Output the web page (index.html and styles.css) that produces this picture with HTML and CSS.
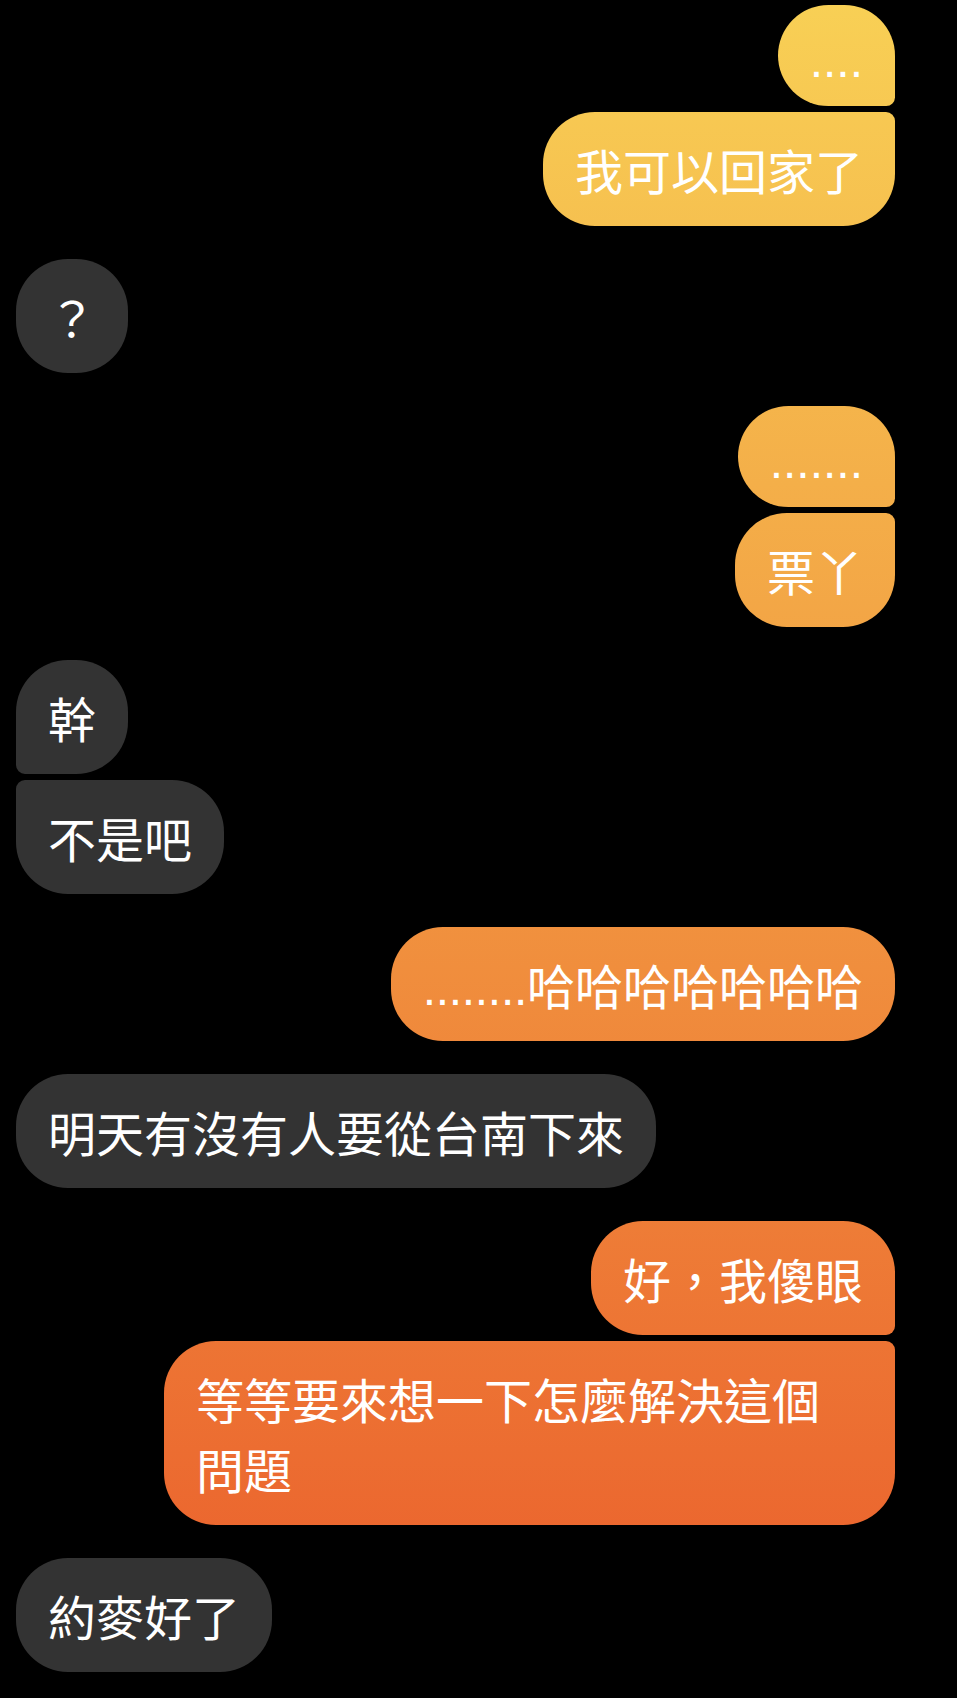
FILE: index.html
```html
<!DOCTYPE html>
<html lang="zh-Hant">
<head>
<meta charset="utf-8">
<title>Chat</title>
<link rel="stylesheet" href="styles.css">
</head>
<body>
<div class="chat">
  <div class="group sent">
    <div class="bubble dots first">....</div>
    <div class="bubble last">我可以回家了</div>
  </div>
  <div class="group recv">
    <div class="bubble">？</div>
  </div>
  <div class="group sent">
    <div class="bubble dots first">.......</div>
    <div class="bubble last">票丫</div>
  </div>
  <div class="group recv">
    <div class="bubble first">幹</div>
    <div class="bubble last">不是吧</div>
  </div>
  <div class="group sent">
    <div class="bubble"><span class="tight">........</span>哈哈哈哈哈哈哈</div>
  </div>
  <div class="group recv">
    <div class="bubble">明天有沒有人要從台南下來</div>
  </div>
  <div class="group sent">
    <div class="bubble first">好，我傻眼</div>
    <div class="bubble last">等等要來想一下怎麼解決這個問題</div>
  </div>
  <div class="group recv">
    <div class="bubble">約麥好了</div>
  </div>
</div>
</body>
</html>
```

FILE: styles.css
```css
html, body {
  margin: 0;
  padding: 0;
  background: #000;
}

.chat {
  display: flex;
  flex-direction: column;
  gap: 33px;
  padding: 5px 62px 25px 16px;
  font-family: "Liberation Sans", "Noto Sans CJK TC", sans-serif;
}

.group {
  display: flex;
  flex-direction: column;
  gap: 6px;
}

.sent {
  align-items: flex-end;
}

.recv {
  align-items: flex-start;
}

.bubble {
  box-sizing: border-box;
  max-width: 731px;
  padding: 27px 32px 17px;
  border-radius: 52px;
  font-size: 48px;
  line-height: 70px;
  color: #fff;
}

.bubble.dots {
  line-height: 57px;
}

.tight {
  letter-spacing: -0.3px;
}

.sent .bubble {
  background: linear-gradient(to bottom, #f8d055 0px, #ea5c2b 1698px) fixed;
}

.recv .bubble {
  background: #333333;
}

.sent .first {
  border-bottom-right-radius: 9px;
}

.sent .last {
  border-top-right-radius: 9px;
}

.recv .first {
  border-bottom-left-radius: 9px;
}

.recv .last {
  border-top-left-radius: 9px;
}
```
